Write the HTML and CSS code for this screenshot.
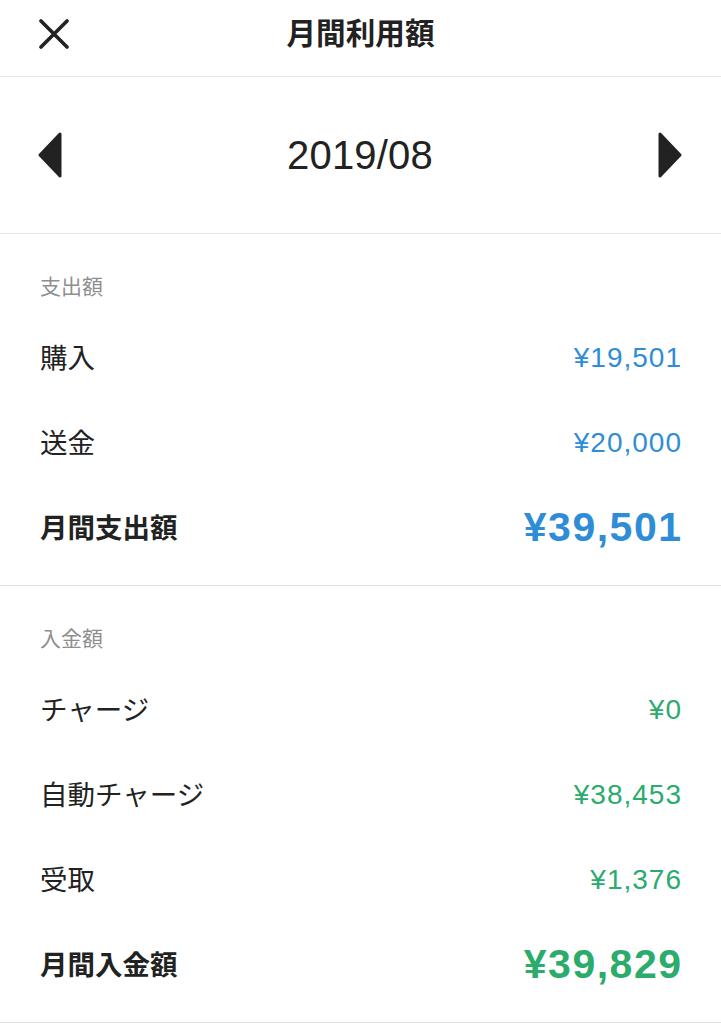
FILE: index.html
```html
<!DOCTYPE html>
<html lang="ja">
<head>
    <meta charset="UTF-8">
    <meta name="viewport" content="width=device-width, initial-scale=1.0">
    <title>月間利用額</title>
    <link rel="stylesheet" href="styles.css">
</head>
<body>
    <!-- Header -->
    <header class="header">
        <button class="close" aria-label="閉じる">
            <svg width="32" height="30" viewBox="0 0 32 30">
                <path d="M3 2 L29 28 M29 2 L3 28" stroke="#222" stroke-width="3.6" stroke-linecap="round" fill="none"/>
            </svg>
        </button>
        <h1 class="title">月間利用額</h1>
    </header>

    <!-- Month switcher -->
    <div class="month">
        <button class="arrow" aria-label="前月">
            <svg width="26" height="48" viewBox="0 0 26 48">
                <path d="M23 3 L23 45 L3 24 Z" fill="#222" stroke="#222" stroke-width="3" stroke-linejoin="round"/>
            </svg>
        </button>
        <div class="month-label">2019/08</div>
        <button class="arrow" aria-label="翌月">
            <svg width="26" height="48" viewBox="0 0 26 48">
                <path d="M3 3 L3 45 L23 24 Z" fill="#222" stroke="#222" stroke-width="3" stroke-linejoin="round"/>
            </svg>
        </button>
    </div>

    <!-- Spending -->
    <section class="section out">
        <div class="section-label">支出額</div>
        <div class="row">
            <span class="name">購入</span>
            <span class="amount">¥19,501</span>
        </div>
        <div class="row">
            <span class="name">送金</span>
            <span class="amount">¥20,000</span>
        </div>
        <div class="row total">
            <span class="name">月間支出額</span>
            <span class="amount">¥39,501</span>
        </div>
    </section>

    <!-- Income -->
    <section class="section in">
        <div class="section-label">入金額</div>
        <div class="row">
            <span class="name">チャージ</span>
            <span class="amount">¥0</span>
        </div>
        <div class="row">
            <span class="name">自動チャージ</span>
            <span class="amount">¥38,453</span>
        </div>
        <div class="row">
            <span class="name">受取</span>
            <span class="amount">¥1,376</span>
        </div>
        <div class="row total">
            <span class="name">月間入金額</span>
            <span class="amount">¥39,829</span>
        </div>
    </section>
</body>
</html>
```

FILE: styles.css
```css
body {
    font-family: "Noto Sans CJK JP", "Noto Sans", sans-serif;
    margin: 0;
    padding: 0;
    background-color: #fff;
    color: #222;
    overflow: hidden;
}
button {
    background: none;
    border: none;
    padding: 0;
    cursor: pointer;
    display: flex;
}
.header {
    height: 76px;
    border-bottom: 1px solid #e8e8e8;
    display: flex;
    align-items: center;
    justify-content: center;
    position: relative;
}
.close {
    position: absolute;
    left: 38px;
    top: 19px;
}
.title {
    margin: 0 0 12px;
    font-size: 29.6px;
    font-weight: bold;
    line-height: 1;
}
.month {
    height: 156px;
    border-bottom: 1px solid #e8e8e8;
    display: flex;
    align-items: center;
    justify-content: space-between;
    padding: 0 38px 0 37px;
}
.month-label {
    font-family: "Liberation Sans", sans-serif;
    font-size: 40px;
    letter-spacing: 0.2px;
}
/* Sections */
.section {
    padding: 33px 40px 17px;
    border-bottom: 1px solid #e0e0e0;
}
.section-label {
    font-size: 21px;
    line-height: 36px;
    color: #8e8e8e;
    margin-bottom: 10px;
}
.row {
    height: 85px;
    display: flex;
    align-items: center;
    justify-content: space-between;
    font-size: 27.5px;
}
.amount {
    font-family: "Liberation Sans", sans-serif;
    font-size: 28px;
    letter-spacing: 1px;
    margin-right: -1px;
    padding-top: 4px;
}
.total .name {
    font-weight: bold;
}
.total .amount {
    font-size: 41px;
    font-weight: bold;
    letter-spacing: 1.5px;
    margin-right: -1.5px;
}
.out .amount {
    color: #2f8dd8;
}
.in .amount {
    color: #2bab6c;
}
```
